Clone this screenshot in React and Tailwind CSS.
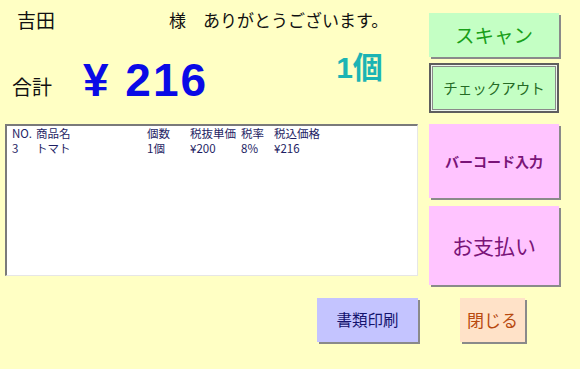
import React from 'react';

const FONT = { fontFamily: '"Noto Sans CJK JP", "Liberation Sans", sans-serif' };

const items = [
  { no: '3', name: 'トマト', qty: '1個', unit: '¥200', rate: '8%', total: '¥216' },
];

function Btn({ className, children }) {
  return (
    <div className={`flex items-center justify-center shadow-[2px_2px_0_#8a8a8a] ${className}`}>
      {children}
    </div>
  );
}

export default function App() {
  return (
    <div style={FONT} className="w-[580px] h-[369px] bg-[#ffffc4] flex flex-col overflow-hidden">
      <div className="flex">
        {/* 左側 */}
        <div className="w-[429px] flex flex-col">
          <div className="h-[40px] flex items-center text-[#111]">
            <span className="ml-[17px] text-[19px]">吉田</span>
            <span className="ml-[114px] text-[17px]">様　ありがとうございます。</span>
          </div>
          <div className="h-[84px] flex">
            <span className="ml-[12px] mt-[37px] text-[20px] text-[#111] leading-none">合計</span>
            <span style={{ fontFamily: '"Liberation Sans", sans-serif' }} className="ml-[31px] mt-[17px] text-[46px] tracking-[2px] font-bold text-[#0a0ae6] leading-none">¥ 216</span>
            <span style={{ fontFamily: '"Liberation Sans", "Noto Sans CJK JP", sans-serif' }} className="ml-[128px] mt-[13px] text-[30px] font-bold text-[#1cb4b4] leading-none">1個</span>
          </div>
          <div className="ml-[5px] w-[413px] h-[152px] bg-white border-l-2 border-t-2 border-[#7a7a7a] border-r border-b border-r-[#e6e6e6] border-b-[#e6e6e6] px-[5px] pt-0 text-[11.5px] leading-[15px] text-[#1e1e64]">
            <div className="grid grid-cols-[24px_111px_43px_51px_33px_auto]">
              <span>NO.</span><span>商品名</span><span>個数</span><span>税抜単価</span><span>税率</span><span>税込価格</span>
            </div>
            {items.map((it) => (
              <div key={it.no} className="grid grid-cols-[24px_111px_43px_51px_33px_auto]">
                <span>{it.no}</span><span>{it.name}</span><span>{it.qty}</span><span>{it.unit}</span><span>{it.rate}</span><span>{it.total}</span>
              </div>
            ))}
          </div>
        </div>

        {/* 右側ボタン */}
        <div className="w-[130px] flex flex-col pt-[13px]">
          <Btn className="h-[44px] bg-[#c4ffc4] text-[#1aa01a] text-[19.5px]">スキャン</Btn>
          <div className="mt-[6px] h-[50px] bg-[#c4ffc4] border-2 border-[#5e5e5e] shadow-[inset_0_0_0_1px_#eef5ee,inset_0_0_0_2px_#8a8a8a] flex items-center justify-center text-[#256b25] text-[14.5px]">
            チェックアウト
          </div>
          <Btn className="mt-[11px] h-[74px] bg-[#ffc4ff] text-[#7a1478] text-[14px] font-bold">バーコード入力</Btn>
          <Btn className="mt-[8px] h-[79px] bg-[#ffc4ff] text-[#7a1478] text-[21px]">お支払い</Btn>
        </div>
      </div>

      <div className="flex mt-[13px]">
        <Btn className="ml-[317px] w-[101px] h-[44px] bg-[#c4c4ff] text-[#14146e] text-[15.5px]">書類印刷</Btn>
        <Btn className="ml-[42px] w-[65px] h-[44px] bg-[#ffe2c8] text-[#b84a10] text-[17px]">閉じる</Btn>
      </div>
    </div>
  );
}
